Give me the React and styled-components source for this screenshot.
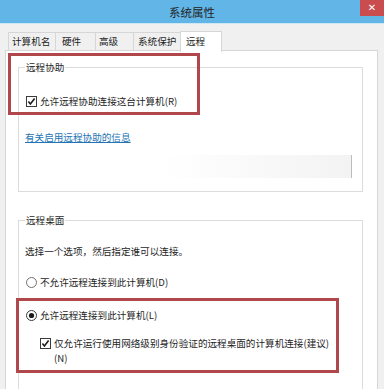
import React from 'react';
import styled, { createGlobalStyle } from 'styled-components';

const GlobalStyle = createGlobalStyle`
  html, body {
    margin: 0;
    padding: 0;
    background: #f0f0f0;
  }
  body {
    font-family: "Noto Sans CJK SC", "Microsoft YaHei", sans-serif;
    font-size: 9.6px;
    color: #1e1e1e;
  }
`;

const Window = styled.div`
  position: relative;
  width: 384px;
  height: 389px;
  overflow: hidden;
  display: flex;
  flex-direction: column;
  background: #f0f0f0;
`;

const TitleBar = styled.div`
  flex-shrink: 0;
  height: 23px;
  display: grid;
  grid-template-columns: 24px 1fr 24px;
  background: #62b6e7;
  border-bottom: 1px solid #cfe7f5;
`;

const Title = styled.div`
  grid-column: 2;
  align-self: center;
  text-align: center;
  font-size: 11.5px;
  line-height: 14px;
  color: #232323;
`;

const CloseButton = styled.div`
  grid-column: 3;
  height: 16px;
  display: flex;
  align-items: center;
  justify-content: center;
  background: #c94c4f;
  color: #fff;
  font-family: "DejaVu Sans", sans-serif;
  font-size: 10px;
  line-height: 1;
`;

const Body = styled.div`
  flex: 1 0 auto;
  display: flex;
  flex-direction: column;
  padding: 7px 6px 0 5px;
`;

const TabStrip = styled.div`
  flex-shrink: 0;
  display: flex;
  align-items: flex-start;
  height: 20px;
  padding-left: 3px;
  margin-bottom: -1px;
  position: relative;
  z-index: 1;
`;

const Tab = styled.div`
  box-sizing: border-box;
  width: ${p => p.$width}px;
  height: ${p => (p.$active ? 21 : 18)}px;
  margin-top: ${p => (p.$active ? 0 : 1)}px;
  margin-right: -1px;
  padding-left: ${p => p.$pad}px;
  border: 1px solid #d6d6d6;
  border-bottom: none;
  background: ${p => (p.$active ? '#ffffff' : '#f0f0f0')};
  line-height: ${p => (p.$active ? 19 : 17)}px;
  white-space: nowrap;
`;

const Panel = styled.div`
  flex: 1 0 auto;
  display: flex;
  flex-direction: column;
  padding: 9px 14px 0 12px;
  border: 1px solid #d6d6d6;
  background: #ffffff;
`;

const Group = styled.fieldset`
  flex-shrink: 0;
  display: flex;
  flex-direction: column;
  align-items: flex-start;
  margin: ${p => p.$gap || 0}px 0 0 0;
  padding: 0 6px ${p => p.$bottom || 0}px 6px;
  border: 1px solid #dcdcdc;
  min-width: 0;
`;

const Legend = styled.legend`
  padding: 0 1px;
  line-height: 14px;
  color: #1e1e1e;
`;

const Row = styled.div`
  display: flex;
  align-items: ${p => (p.$top ? 'flex-start' : 'center')};
  gap: 3px;
  margin-top: ${p => p.$gap}px;
  padding-left: ${p => p.$indent || 1}px;
  line-height: ${p => p.$lh || 14}px;
  white-space: nowrap;
`;

const Text = styled.div`
  margin-top: ${p => p.$gap}px;
  line-height: 14px;
  white-space: nowrap;
`;

const Link = styled.a`
  margin-top: ${p => p.$gap}px;
  line-height: 14px;
  color: #2474b5;
  text-decoration: underline;
`;

const IconBox = styled.span`
  display: inline-flex;
  margin-top: ${p => p.$offset || 0}px;
`;

const FadedButton = styled.div`
  align-self: flex-end;
  box-sizing: border-box;
  width: 190px;
  height: 23px;
  margin-top: 11px;
  margin-right: 4px;
  background: linear-gradient(to right, #ffffff, #f3f3f3);
  border-right: 1px solid #bdbdbd;
`;

const Button = styled.div`
  align-self: flex-end;
  box-sizing: border-box;
  width: 87px;
  height: 23px;
  margin-top: 28px;
  margin-right: 4px;
  border: 1px solid #adadad;
  background: #e5e5e5;
`;

const Callout = styled.div`
  position: absolute;
  box-sizing: border-box;
  top: ${p => p.$top}px;
  left: ${p => p.$left}px;
  width: ${p => p.$width}px;
  height: ${p => p.$height}px;
  border: 3px solid #b0474b;
  pointer-events: none;
`;

const CheckIcon = () => (
  <svg width="11" height="11" viewBox="0 0 11 11">
    <rect x="0.5" y="0.5" width="10" height="10" fill="#fff" stroke="#3a3a3a" />
    <path d="M2.4 5.6 L4.4 7.9 L8.6 2.6" fill="none" stroke="#1a1a1a" strokeWidth="1.6" />
  </svg>
);

const RadioIcon = ({ checked }) => (
  <svg width="11" height="11" viewBox="0 0 11 11">
    <circle cx="5.5" cy="5.5" r="5" fill="#fff" stroke={checked ? '#3a3a3a' : '#707070'} />
    {checked && <circle cx="5.5" cy="5.5" r="2.6" fill="#1a1a1a" />}
  </svg>
);

const tabs = [
  { label: '计算机名', width: 48, pad: 3 },
  { label: '硬件', width: 41, pad: 6 },
  { label: '高级', width: 39, pad: 3 },
  { label: '系统保护', width: 48, pad: 4 },
  { label: '远程', width: 42, pad: 5, active: true },
];

const App = () => {
  return (
    <Window>
      <GlobalStyle />
      <TitleBar>
        <Title>系统属性</Title>
        <CloseButton>✕</CloseButton>
      </TitleBar>
      <Body>
        <TabStrip>
          {tabs.map(t => (
            <Tab key={t.label} $width={t.width} $pad={t.pad} $active={t.active}>
              {t.label}
            </Tab>
          ))}
        </TabStrip>
        <Panel>
          <Group $bottom={13}>
            <Legend>远程协助</Legend>
            <Row $gap={20}>
              <CheckIcon />
              <span>允许远程协助连接这台计算机(R)</span>
            </Row>
            <Link $gap={22}>有关启用远程协助的信息</Link>
            <FadedButton />
          </Group>
          <Group $gap={21}>
            <Legend>远程桌面</Legend>
            <Text $gap={17}>选择一个选项，然后指定谁可以连接。</Text>
            <Row $gap={17}>
              <RadioIcon />
              <span>不允许远程连接到此计算机(D)</span>
            </Row>
            <Row $gap={19}>
              <RadioIcon checked />
              <span>允许远程连接到此计算机(L)</span>
            </Row>
            <Row $gap={14} $indent={15} $lh={15} $top>
              <IconBox $offset={2}>
                <CheckIcon />
              </IconBox>
              <span>
                仅允许运行使用网络级别身份验证的远程桌面的计算机连接(建议)
                <br />
                (N)
              </span>
            </Row>
            <Button />
          </Group>
        </Panel>
      </Body>
      <Callout $top={53} $left={8} $width={192} $height={62} />
      <Callout $top={298} $left={16} $width={323} $height={75} />
    </Window>
  );
};

export default App;
